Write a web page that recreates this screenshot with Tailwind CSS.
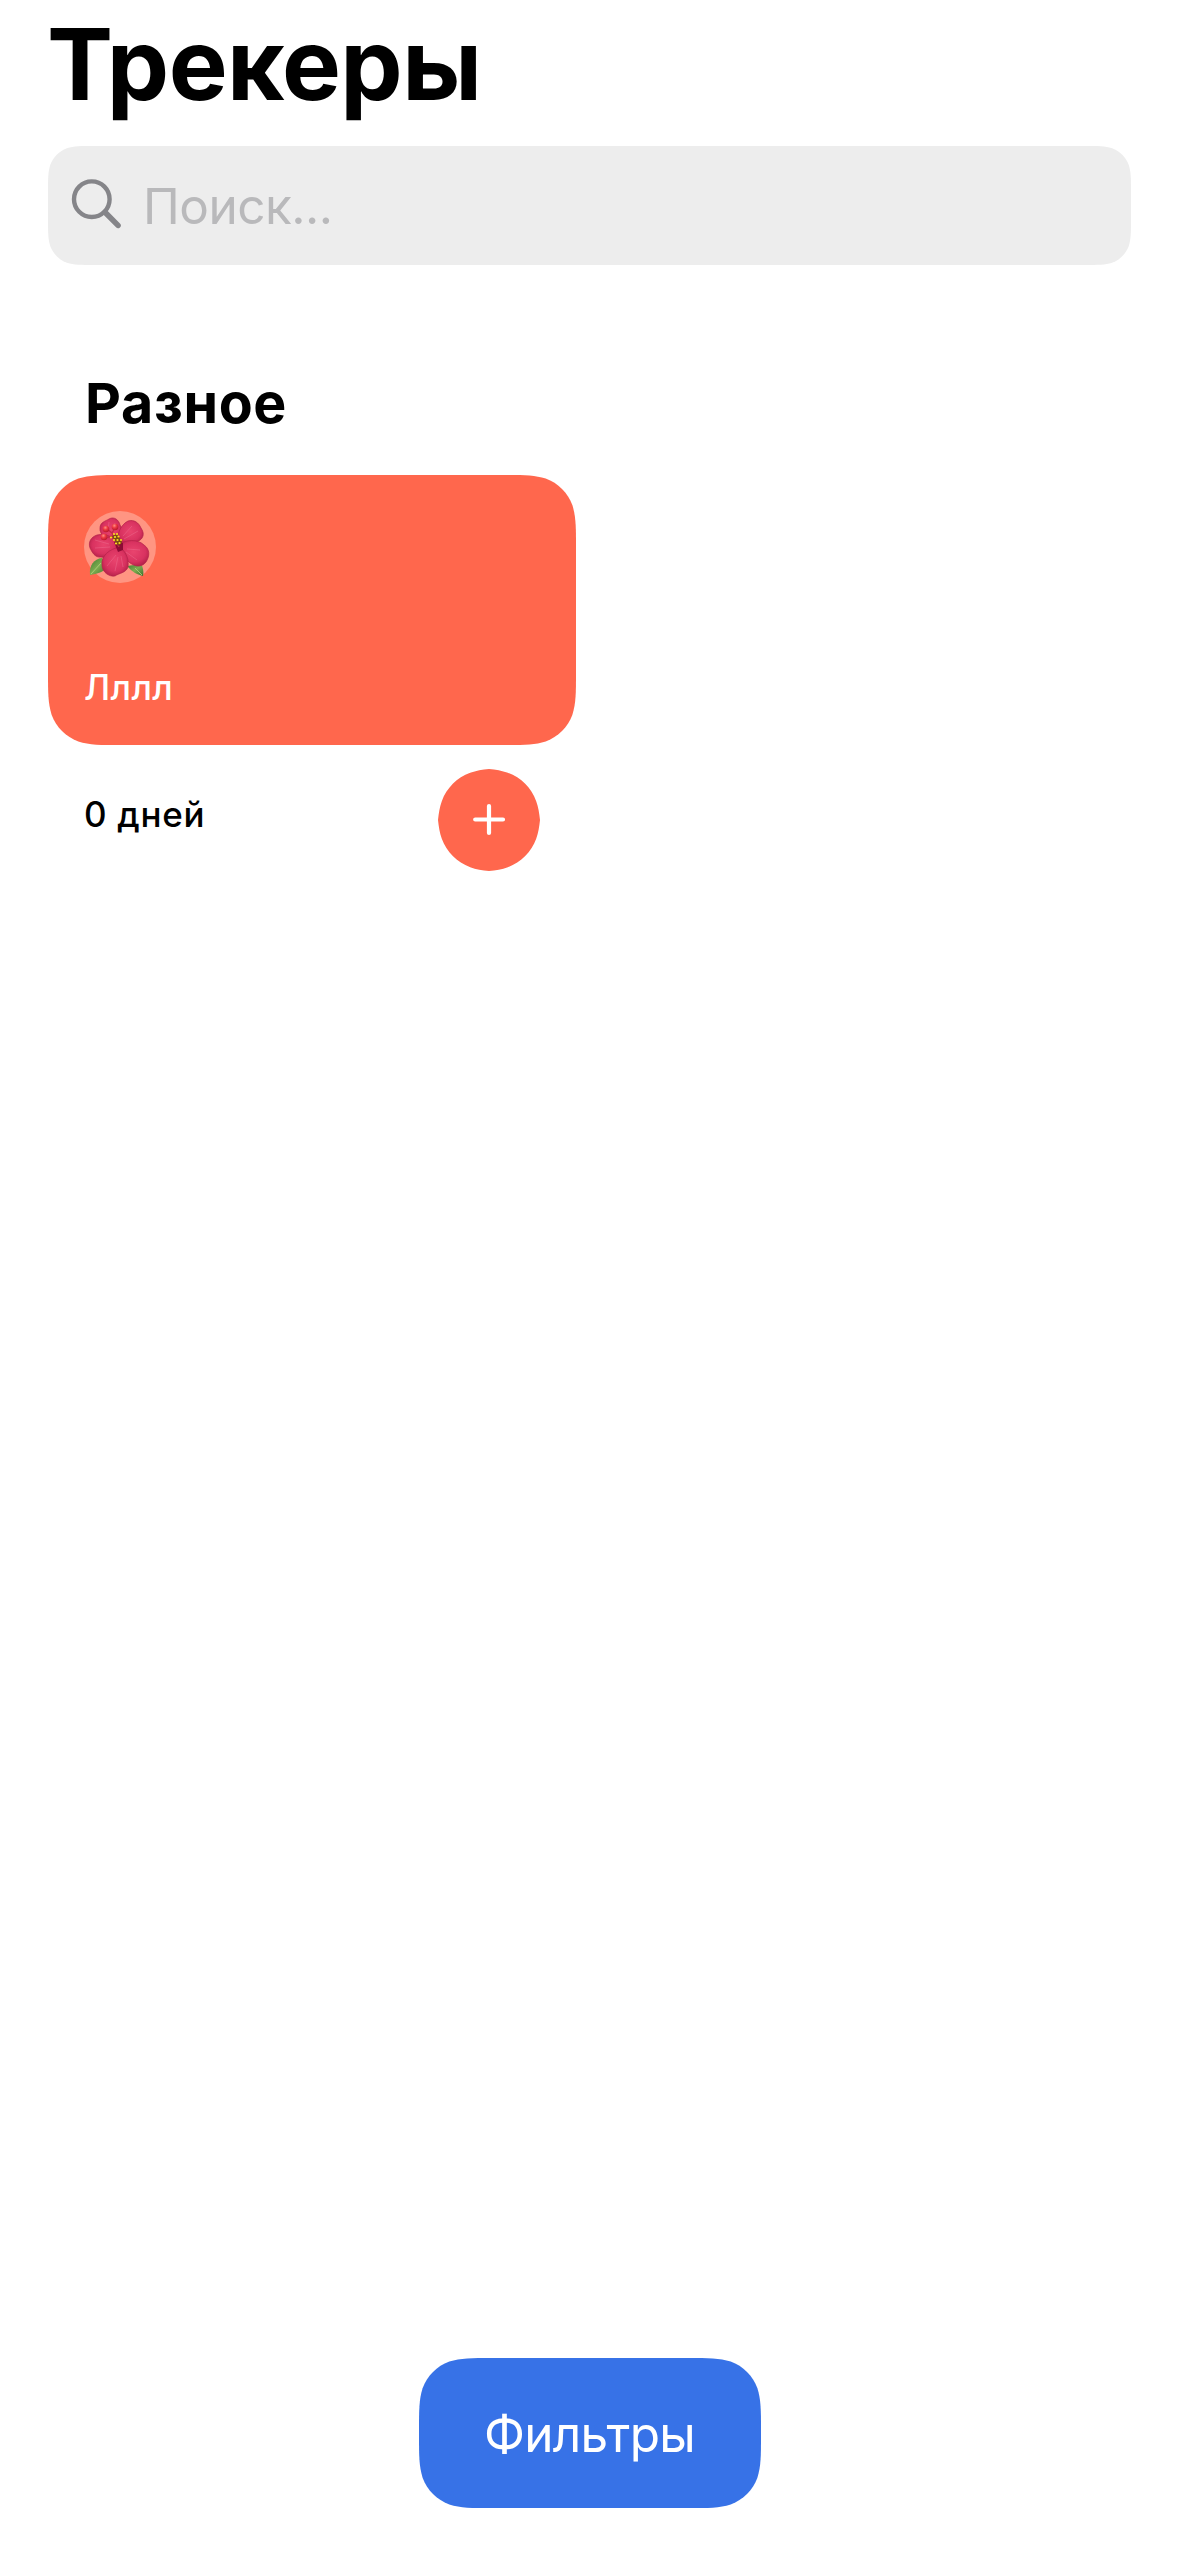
<!DOCTYPE html>
<html lang="ru">
<head>
<meta charset="utf-8">
<title>Трекеры</title>
<script src="https://cdn.jsdelivr.net/npm/@tailwindcss/browser@4"></script>
</head>
<body class="bg-white">
<div class="flex h-[2556px] w-[1179px] flex-col overflow-hidden bg-white px-12 font-['Inter',sans-serif] text-black">
  <h1 class="-ml-px h-32 text-[99px] leading-[128px] font-bold tracking-[-0.6px] whitespace-nowrap">Трекеры</h1>

  <div class="relative mt-[18px] flex h-[119px] items-center">
    <svg class="absolute inset-0 size-full" viewBox="0 0 1083 119" fill="#ededed"><path d="M45.9 0H1037.1C1050.3 0 1056.9 0 1064.1 2.2C1071.8 5.1 1077.9 11.2 1080.8 18.9C1083 26.1 1083 32.7 1083 45.9V73.1C1083 86.3 1083 92.9 1080.8 100.1C1077.9 107.8 1071.8 113.9 1064.1 116.8C1056.9 119 1050.3 119 1037.1 119H45.9C32.7 119 26.1 119 18.9 116.8C11.2 113.9 5.1 107.8 2.2 100.1C0 92.9 0 86.3 0 73.1V45.9C0 32.7 0 26.1 2.2 18.9C5.1 11.2 11.2 5.1 18.9 2.2C26.1 0 32.7 0 45.9 0Z"/></svg>
    <svg class="relative mb-1 ml-[22px] size-[54px]" viewBox="0 0 54 54" fill="none" stroke="#858589" stroke-linecap="round"><circle cx="21.8" cy="22.2" r="17.8" stroke-width="4.4"/><path d="M35 35.2L48 48.4" stroke-width="5.6"/></svg>
    <span class="relative ml-[19px] text-[49.5px] leading-[60px] tracking-[-0.5px] text-[#b9b9bb]">Поиск...</span>
  </div>

  <h2 class="mt-[106px] ml-[37px] h-16 text-[55.5px] leading-[64px] font-bold tracking-[0.7px]">Разное</h2>

  <section class="mt-10 w-[528px]">
    <div class="relative flex h-[270px] flex-col justify-between px-9 py-9">
      <svg class="absolute inset-0 size-full" viewBox="0 0 528 270" fill="#ff674d"><path d="M73.4 0H454.6C475.8 0 486.3 0 497.7 3.6C510.1 8.1 519.9 17.9 524.4 30.3C528 41.7 528 52.2 528 73.4V196.6C528 217.8 528 228.3 524.4 239.7C519.9 252.1 510.1 261.9 497.7 266.4C486.3 270 475.8 270 454.6 270H73.4C52.2 270 41.7 270 30.3 266.4C17.9 261.9 8.1 252.1 3.6 239.7C0 228.3 0 217.8 0 196.6V73.4C0 52.2 0 41.7 3.6 30.3C8.1 17.9 17.9 8.1 30.3 3.6C41.7 0 52.2 0 73.4 0Z"/></svg>
      <!-- hibiscus -->
      <svg class="relative size-[72px]" viewBox="0 0 72 72">
        <defs>
          <radialGradient id="petal" cx="50%" cy="45%" r="60%"><stop offset="0" stop-color="#e9446e"/><stop offset=".65" stop-color="#d93260"/><stop offset="1" stop-color="#b01f47"/></radialGradient>
          <linearGradient id="leaf" x1="0" y1="0" x2="1" y2="1"><stop offset="0" stop-color="#3f7a31"/><stop offset=".5" stop-color="#7dad50"/><stop offset="1" stop-color="#3a702d"/></linearGradient>
          <radialGradient id="tip" cx="40%" cy="30%" r="65%"><stop offset="0" stop-color="#ff8d83"/><stop offset=".5" stop-color="#ed3a42"/><stop offset="1" stop-color="#bd1b31"/></radialGradient>
        </defs>
        <circle cx="36" cy="36" r="36" fill="#ff9582"/>
        <path d="M18 47C10 48 5 54 6 64C13 63 20 61 23 56Z" fill="url(#leaf)"/>
        <path d="M43 55C48 61 54 64 59 65C60 61 59 56 57 53Z" fill="url(#leaf)"/>
        <path d="M7 63L17 52M58 64L51 57" stroke="#b5cf82" stroke-width=".8"/>
        <path d="M33 34C24 29 15 24 16 17C16 11 22 10 25 8C30 5 35 9 36 14C40 19 38 28 33 34Z" fill="url(#petal)" stroke="#b52149" stroke-width=".7"/>
        <path d="M34 34C32 25 36 14 44 10C50 8 55 12 57 17C62 24 58 30 51 31C45 32 40 32 34 34Z" fill="url(#petal)" stroke="#b52149" stroke-width=".7"/>
        <path d="M34 35C31 43 24 48 17 46C11 47 8 41 6 37C4 31 7 26 13 24C21 22 30 25 34 35Z" fill="url(#petal)" stroke="#b52149" stroke-width=".7"/>
        <path d="M34 34C42 28 54 28 60 34C66 38 66 45 62 51C57 58 48 55 43 49C38 44 38 38 34 34Z" fill="url(#petal)" stroke="#b52149" stroke-width=".7"/>
        <path d="M36 36C43 42 45 49 44 56C42 62 35 62 31 65C25 66 18 61 18 54C17 45 25 38 36 36Z" fill="url(#petal)" stroke="#b52149" stroke-width=".7"/>
        <path d="M39 25L48 15M40 28L54 20M25 33L11 29M26 36L11 37M43 38L56 39M42 41L53 49M32 44L23 55M34 46L31 60M37 45L39 56M24 20L25 11M29 19L31 12" stroke="#f27998" stroke-width=".6" opacity=".65"/>
        <path d="M30 31L39 32L39 39L34 41Z" fill="#8c0b35"/>
        <path d="M35 36L28 22L23 18M28 22L31 17M29 25L21 27" fill="none" stroke="#c42849" stroke-width="1.4"/>
        <g fill="url(#tip)"><circle cx="22" cy="18" r="3.3"/><circle cx="31" cy="16" r="3.3"/><circle cx="20" cy="26" r="3.3"/></g>
        <path d="M28 25L33 23L38 31L35 35L31 31Z" fill="#7d4b14"/>
        <g fill="#f9dc21"><circle cx="30" cy="23" r="1.1"/><circle cx="33" cy="23" r="1.1"/><circle cx="27" cy="26.5" r="1.1"/><circle cx="31" cy="26" r="1.1"/><circle cx="34.5" cy="25.5" r="1.1"/><circle cx="30" cy="29" r="1.1"/><circle cx="33.5" cy="29" r="1.1"/><circle cx="37" cy="29" r="1.1"/><circle cx="32" cy="32.5" r="1.1"/><circle cx="35.5" cy="32" r="1.1"/></g>
      </svg>
      <span class="relative h-11 text-[35px] leading-[44px] font-medium tracking-[0.4px] text-white">Лллл</span>
    </div>
    <div class="mt-6 flex justify-between px-9">
      <span class="mt-[23px] h-11 text-[35px] leading-[44px] font-medium tracking-[0.7px]">0 дней</span>
      <svg class="size-[102px]" viewBox="0 0 102 102"><path fill="#ff674d" d="M51 0C57.7.8 64 1.6 69.8 3.8C83 8.6 93.4 19 98.2 32.2C100.4 38 101.2 44.3 102 51C101.2 57.7 100.4 64 98.2 69.8C93.4 83 83 93.4 69.8 98.2C64 100.4 57.7 101.2 51 102C44.3 101.2 38 100.4 32.2 98.2C19 93.4 8.6 83 3.8 69.8C1.6 64 .8 57.7 0 51C.8 44.3 1.6 38 3.8 32.2C8.6 19 19 8.6 32.2 3.8C38 1.6 44.3.8 51 0Z"/><path d="M51 37V64M37.2 50.5H65" stroke="white" stroke-width="4.2" stroke-linecap="round"/></svg>
    </div>
  </section>

  <button class="relative mt-auto mb-12 flex h-[150px] w-[342px] items-center justify-center self-center text-white">
    <svg class="absolute inset-0 size-full" viewBox="0 0 342 150" fill="#3772e7"><path d="M73.4 0H268.6C289.8 0 300.3 0 311.7 3.6C324.1 8.1 333.9 17.9 338.4 30.3C342 41.7 342 52.2 342 73.4V76.6C342 97.8 342 108.3 338.4 119.7C333.9 132.1 324.1 141.9 311.7 146.4C300.3 150 289.8 150 268.6 150H73.4C52.2 150 41.7 150 30.3 146.4C17.9 141.9 8.1 132.1 3.6 119.7C0 108.3 0 97.8 0 76.6V73.4C0 52.2 0 41.7 3.6 30.3C8.1 17.9 17.9 8.1 30.3 3.6C41.7 0 52.2 0 73.4 0Z"/></svg>
    <span class="relative mt-0.5 text-[49.5px] leading-[60px] tracking-[-0.7px]">Фильтры</span>
  </button>
</div>
</body>
</html>
